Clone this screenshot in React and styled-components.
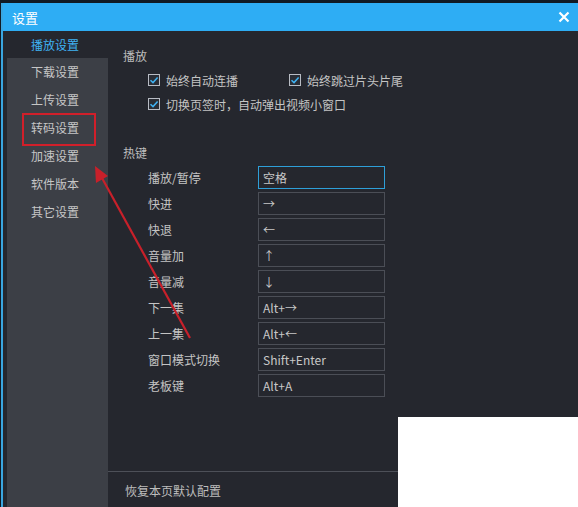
import React from 'react'
import styled, { createGlobalStyle } from 'styled-components'

const Global = createGlobalStyle`
html,body{margin:0;padding:0;background:#141d27;}
*{box-sizing:border-box;}
`

const Screen = styled.div`
position:relative;
width:578px;
height:507px;
overflow:hidden;
background:#101a24;
padding-top:3px;
font-family:"Noto Sans CJK SC","Noto Sans",sans-serif;
font-size:12px;
`
const Window = styled.div`
display:flex;
flex-direction:column;
height:504px;
margin-left:1px;
border-left:2px solid #3aa6e0;
`
const TitleBar = styled.div`
height:28px;
flex-shrink:0;
background:#2eadf4;
display:flex;
align-items:center;
justify-content:space-between;
padding:0 8px 0 9px;
color:#fff;
font-size:13px;
`
const Close = styled.svg`
width:12px;
height:12px;
`
const Body = styled.div`
flex:1;
display:flex;
background:#25272e;
padding-left:4px;
min-height:0;
`
const Sidebar = styled.div`
width:101px;
display:flex;
flex-direction:column;
`
const NavItem = styled.div`
position:relative;
height:${p=>p.$active?27:28}px;
line-height:${p=>p.$active?27:28}px;
padding-left:24px;
color:${p=>p.$active?'#3fb2f2':'#c6c6c6'};
font-size:12px;
&::after{
  content:'';
  display:${p=>p.$marked?'block':'none'};
  position:absolute;
  left:15px;
  top:-1px;
  width:70px;
  height:29px;
  border:2px solid #d11f2a;
}
`
const NavList = styled.div`
flex:1;
background:#3c3f46;
`
const Content = styled.div`
flex:1;
display:flex;
flex-direction:column;
color:#c4c4c4;
`
const Main = styled.div`
flex:1;
padding:16px 0 0 15px;
`
const SectionTitle = styled.div`
height:18px;
line-height:18px;
color:#bdbdbd;
margin-bottom:${p=>p.$mb||0}px;
`
const CheckRow = styled.div`
display:flex;
align-items:center;
height:24px;
padding-left:25px;
`
const Check = styled.label`
display:flex;
align-items:center;
gap:6px;
width:${p=>p.$w?p.$w+'px':'auto'};
`
const Box = styled.span`
width:12px;
height:12px;
border:1px solid #b8bcc4;
background:#2a2d35;
display:flex;
align-items:center;
justify-content:center;
`
const HotkeyList = styled.div`
display:flex;
flex-direction:column;
gap:3px;
padding-left:25px;
`
const HotkeyRow = styled.div`
display:flex;
align-items:center;
height:23px;
`
const KeyLabel = styled.div`
width:110px;
`
const KeyField = styled.div`
width:127px;
height:23px;
border:1px solid ${p=>p.$focus?'#2e9fd8':'#4b4e56'};
background:#25272e;
padding-left:4px;
line-height:21px;
color:#c8c8c8;
font-size:12px;
`
const Footer = styled.div`
height:36px;
border-top:1px solid #4d5058;
padding-left:17px;
line-height:38px;
color:#bdbdbd;
`
const Blank = styled.div`
position:absolute;
left:398px;
top:417px;
right:0;
bottom:0;
background:#fff;
`
const Arrow = styled.svg`
position:absolute;
left:0;
top:0;
pointer-events:none;
`

const CheckMark = () => (
  <svg width="10" height="10" viewBox="0 0 10 10">
    <path d="M1.5 5.2 L4 7.6 L8.6 2.4" stroke="#3fb2f2" strokeWidth="1.5" fill="none"/>
  </svg>
)

const nav = ['下载设置','上传设置','转码设置','加速设置','软件版本','其它设置']
const keys = [
  ['播放/暂停','空格'],
  ['快进','→'],
  ['快退','←'],
  ['音量加','↑'],
  ['音量减','↓'],
  ['下一集','Alt+→'],
  ['上一集','Alt+←'],
  ['窗口模式切换','Shift+Enter'],
  ['老板键','Alt+A'],
]

export default function App(){
  return (
    <Screen>
      <Global/>
      <Window>
        <TitleBar>
          <span>设置</span>
          <Close viewBox="0 0 12 12">
            <path d="M1.5 1.5 L10.5 10.5 M10.5 1.5 L1.5 10.5" stroke="#fff" strokeWidth="2.2"/>
          </Close>
        </TitleBar>
        <Body>
          <Sidebar>
            <NavItem $active>播放设置</NavItem>
            <NavList>
              {nav.map(n=><NavItem key={n} $marked={n==='转码设置'}>{n}</NavItem>)}
            </NavList>
          </Sidebar>
          <Content>
            <Main>
              <SectionTitle $mb={3}>播放</SectionTitle>
              <CheckRow>
                <Check $w={141}><Box><CheckMark/></Box>始终自动连播</Check>
                <Check><Box><CheckMark/></Box>始终跳过片头片尾</Check>
              </CheckRow>
              <CheckRow>
                <Check><Box><CheckMark/></Box>切换页签时，自动弹出视频小窗口</Check>
              </CheckRow>
              <div style={{height:28}}/>
              <SectionTitle $mb={4}>热键</SectionTitle>
              <HotkeyList>
                {keys.map(([l,k],i)=>(
                  <HotkeyRow key={l}>
                    <KeyLabel>{l}</KeyLabel>
                    <KeyField $focus={i===0}>{k}</KeyField>
                  </HotkeyRow>
                ))}
              </HotkeyList>
            </Main>
            <Footer>恢复本页默认配置</Footer>
          </Content>
        </Body>
      </Window>
      <Blank/>
      <Arrow width="578" height="507" viewBox="0 0 578 507">
        <line x1="190" y1="338" x2="102" y2="178" stroke="#c8202a" strokeWidth="2.2"/>
        <polygon points="95,166 96,183 108,176" fill="#c8202a"/>
      </Arrow>
    </Screen>
  )
}
